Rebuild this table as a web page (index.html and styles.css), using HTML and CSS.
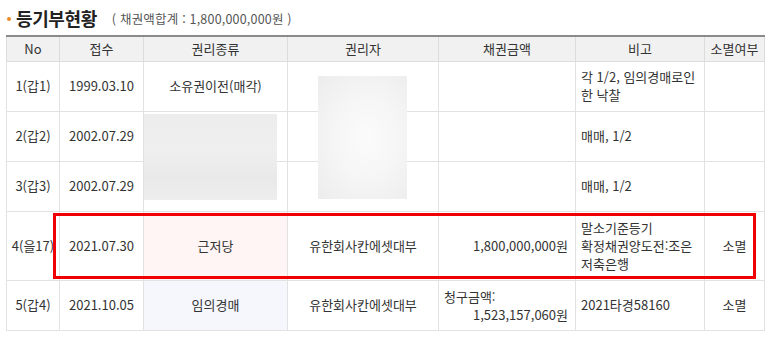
FILE: index.html
```html
<!DOCTYPE html>
<html lang="ko">
<head>
<meta charset="utf-8">
<link rel="stylesheet" href="styles.css">
</head>
<body>
<div class="page">
  <div class="title">
    <span class="dot"></span>
    <h2 class="title-main">등기부현황</h2>
    <span class="title-sub">( 채권액합계 : 1,800,000,000원 )</span>
  </div>
  <div class="table-wrap">
    <table class="reg">
      <colgroup>
        <col class="c1"><col class="c2"><col class="c3"><col class="c4"><col class="c5"><col class="c6"><col class="c7">
      </colgroup>
      <thead>
        <tr>
          <th>No</th><th>접수</th><th>권리종류</th><th>권리자</th><th>채권금액</th><th>비고</th><th>소멸여부</th>
        </tr>
      </thead>
      <tbody>
        <tr class="r50">
          <td>1(갑1)</td><td>1999.03.10</td><td>소유권이전(매각)</td><td></td><td class="amt"></td><td class="note">각 1/2, 임의경매로인<br>한 낙찰</td><td></td>
        </tr>
        <tr class="r50">
          <td>2(갑2)</td><td>2002.07.29</td><td></td><td></td><td class="amt"></td><td class="note">매매, 1/2</td><td></td>
        </tr>
        <tr class="r50">
          <td>3(갑3)</td><td>2002.07.29</td><td></td><td></td><td class="amt"></td><td class="note">매매, 1/2</td><td></td>
        </tr>
        <tr class="r69">
          <td>4(을17)</td><td>2021.07.30</td><td class="pink">근저당</td><td>유한회사칸에셋대부</td><td class="amt">1,800,000,000원</td><td class="note">말소기준등기<br>확정채권양도전:조은<br>저축은행</td><td>소멸</td>
        </tr>
        <tr class="r50">
          <td>5(갑4)</td><td>2021.10.05</td><td class="blue">임의경매</td><td>유한회사칸에셋대부</td><td class="amt top"><div class="clip"><div class="claim-label">청구금액:</div><div class="claim-val">1,523,157,060원</div></div></td><td class="note">2021타경58160</td><td>소멸</td>
        </tr>
      </tbody>
    </table>
    <div class="blur blur-a"></div>
    <div class="blur blur-b"></div>
    <div class="highlight"></div>
  </div>
</div>
</body>
</html>
```
FILE: styles.css
```css
* { box-sizing: border-box; }
html, body { margin: 0; padding: 0; background: #fff; }
body {
  font-family: "Noto Sans CJK KR", "Noto Sans", sans-serif;
  color: #333;
  font-size: 13px;
}
.page { padding: 0 9px 0 6px; }
.title {
  display: flex;
  align-items: center;
  height: 35px;
  padding: 3px 0 3px 1px;
}
.dot {
  width: 4px; height: 4px; border-radius: 50%;
  background: #f08a24;
  margin-right: 5px;
  margin-top: 2px;
}
.title-main {
  margin: 0;
  font-size: 18px;
  font-weight: 700;
  color: #222;
  letter-spacing: -0.4px;
}
.title-sub {
  margin-left: 15px;
  font-size: 12.5px;
  color: #555;
  margin-top: 2px;
  letter-spacing: 0.2px;
}
.table-wrap { position: relative; width: 758px; }
.reg {
  width: 758px;
  table-layout: fixed;
  border-collapse: collapse;
  border-top: 2px solid #8a8a8a;
}
.c1 { width: 53px; } .c2 { width: 84px; } .c3 { width: 144px; }
.c4 { width: 151px; } .c5 { width: 137px; } .c6 { width: 129px; } .c7 { width: 60px; }
.reg th {
  background: #f1f1f1;
  font-weight: 400;
  color: #333;
  height: 25px;
  border: 1px solid #dcdcdc;
  border-top: none;
  padding: 0;
  line-height: 18px;
}
.reg td {
  border: 1px solid #e2e2e2;
  text-align: center;
  padding: 0 4px;
  line-height: 18px;
  white-space: nowrap;
}
.r50 td { height: 50px; }
.r69 td { height: 69px; }
.reg td.note { text-align: left; padding-left: 5px; white-space: normal; }
.reg td.amt { text-align: right; padding-right: 7px; }
.reg td.top { vertical-align: top; padding-top: 7px; text-align: left; padding-left: 5px; }
.clip { height: 35px; overflow: hidden; }
.claim-val { text-align: right; }
.pink { background: #fff5f5; }
.blue { background: #f5f7fd; }
.blur { position: absolute; }
.blur-a {
  left: 138px; top: 79px; width: 133px; height: 86px;
  background: linear-gradient(180deg, #ececec 0%, #efefef 40%, #e9e9e9 75%, #eeeeee 100%);
}
.blur-b {
  left: 312px; top: 41px; width: 89px; height: 123px;
  background: radial-gradient(ellipse at 55% 50%, #fbfbfb 0%, #f6f6f6 45%, #ececec 100%);
}
.highlight {
  position: absolute;
  left: 47px; top: 178px; width: 703px; height: 66px;
  border: 3px solid #f00000;
}
```
